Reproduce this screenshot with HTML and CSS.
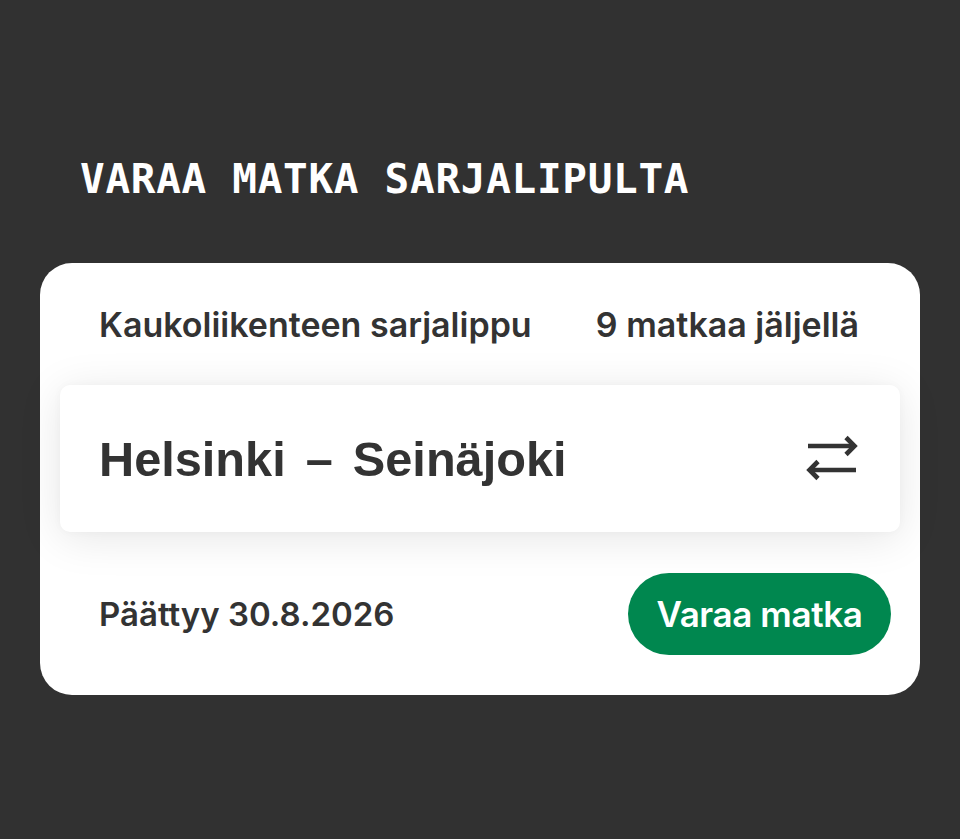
FILE: index.html
```html
<!DOCTYPE html>
<html lang="fi">
<head>
<meta charset="utf-8">
<link rel="stylesheet" href="styles.css">
</head>
<body>
<main class="page">
  <h1 class="title">VARAA MATKA SARJALIPULTA</h1>
  <section class="card">
    <div class="card-head">
      <span class="ticket">Kaukoliikenteen sarjalippu</span>
      <span class="left">9 matkaa jäljellä</span>
    </div>
    <div class="route">
      <div class="route-text"><span>Helsinki</span><span class="dash">–</span><span>Seinäjoki</span></div>
      <svg class="swap" viewBox="0 0 52 50" width="52" height="50" aria-hidden="true">
        <g fill="none" stroke="#333" stroke-width="4.6" stroke-linecap="butt" stroke-linejoin="miter">
          <path d="M2 12 H48"/>
          <path d="M40 3.5 L48.5 12 L40 20.5"/>
          <path d="M50 36 H4"/>
          <path d="M12 27.5 L3.5 36 L12 44.5"/>
        </g>
      </svg>
    </div>
    <div class="card-foot">
      <span class="expires">Päättyy 30.8.2026</span>
      <button class="book">Varaa matka</button>
    </div>
  </section>
</main>
</body>
</html>
```

FILE: styles.css
```css
html, body {
  margin: 0;
  padding: 0;
}
body {
  background: #313131;
  width: 960px;
  height: 839px;
  overflow: hidden;
}
.page {
  padding: 154px 40px 0;
}
.title {
  margin: 0 0 59px 40px;
  font-family: "DejaVu Sans Mono", "Liberation Mono", monospace;
  font-weight: 700;
  font-size: 41px;
  line-height: 50px;
  letter-spacing: 0.7px;
  color: #ffffff;
}
.card {
  background: #ffffff;
  border-radius: 32px;
  height: 432px;
  display: flex;
  flex-direction: column;
  color: #333333;
  font-family: Inter, "Noto Sans", sans-serif;
  font-weight: 600;
}
.card-head {
  height: 122px;
  display: flex;
  align-items: center;
  justify-content: space-between;
  padding: 0 61px 0 59px;
  font-size: 34px;
  letter-spacing: 0;
}
.route {
  margin: 0 20px;
  height: 147px;
  background: #ffffff;
  border-radius: 10px;
  box-shadow: 0 6px 44px rgba(0, 0, 0, 0.1), 0 0 8px rgba(0, 0, 0, 0.03);
  display: flex;
  align-items: center;
  justify-content: space-between;
  padding: 0 42px 0 39px;
}
.route-text {
  font-family: "Liberation Sans", Arial, sans-serif;
  font-weight: 700;
  font-size: 48.7px;
  display: flex;
  color: #333333;
}
.dash {
  margin: 0 20px;
}
.swap {
  display: block;
}
.card-foot {
  flex: 1;
  display: flex;
  align-items: center;
  justify-content: space-between;
  padding: 0 29px 0 59px;
}
.expires {
  font-size: 33px;
  letter-spacing: 0;
}
.book {
  font-family: Inter, "Noto Sans", sans-serif;
  font-weight: 600;
  font-size: 35px;
  letter-spacing: -0.4px;
  color: #ffffff;
  background: #00874f;
  border: none;
  border-radius: 41px;
  width: 263px;
  height: 82px;
  padding: 0;
}
```
